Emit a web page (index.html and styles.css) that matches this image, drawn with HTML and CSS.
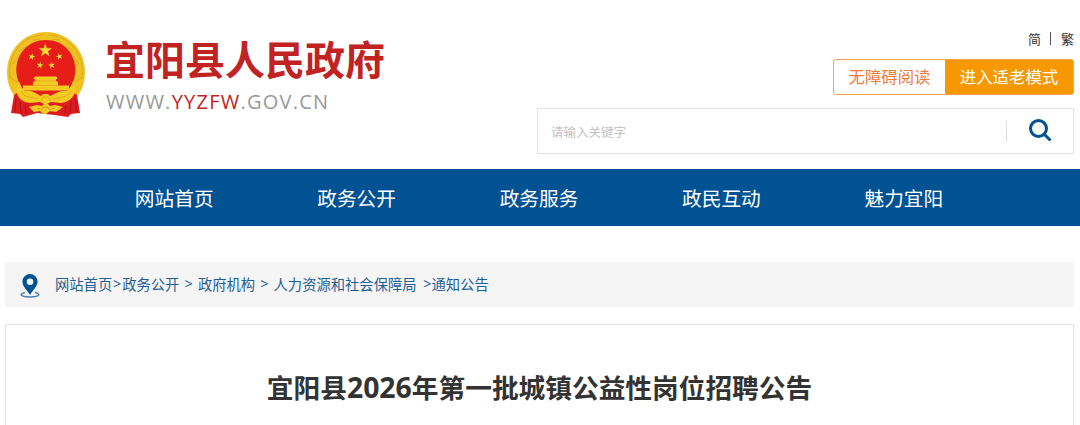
FILE: index.html
```html
<!DOCTYPE html>
<html lang="zh-CN">

<head>
  <meta charset="UTF-8" />
  <meta name="viewport" content="width=device-width, initial-scale=1.0" />
  <title>宜阳县人民政府</title>
  <link rel="stylesheet" href="styles.css">
</head>

<body>
  <header class="header container">
    <a href="#" class="logo">
      <svg class="emblem" viewBox="0 0 79 86" aria-hidden="true">
        <defs>
          <path id="star" d="M0-10 2.3-3.1 9.5-3.1 3.7 1.2 5.9 8.1 0 3.8-5.9 8.1-3.7 1.2-9.5-3.1-2.3-3.1Z" />
        </defs>
        <path fill="#efc122" d="M39 1C17 1 0 19 0 41c0 12 4 21 11 28h56c7-7 11-16 11-28C78 19 61 1 39 1Z" />
        <path fill="none" stroke="#d9a514" stroke-width=".8" d="M3 47C0 22 17 4 37 4M75 47C78 22 61 4 41 4M6 33l5-8M12 20l8-5M25 9l8-1M72 33l-5-8M66 20l-8-5M53 9l-8-1M2 46l8 5M76 46l-8 5" />
        <path fill="#e71d1a" d="M38.800 9C22 9 9.300 22 9.300 39c0 8 3 15 7 20l11 8h24l10-8c4-5 7-12 7-20C68.300 22 56 9 38.800 9Z" />
        <g fill="#fbd72f">
          <use href="#star" transform="translate(38.300 19.500) scale(.72)" />
          <use href="#star" transform="translate(24.700 25.700) rotate(15) scale(.36)" />
          <use href="#star" transform="translate(52.300 25.500) rotate(-15) scale(.36)" />
          <use href="#star" transform="translate(33 34.300) rotate(10) scale(.36)" />
          <use href="#star" transform="translate(44.700 34.300) rotate(-10) scale(.36)" />
        </g>
        <path fill="#f5ca22" d="M28 45.500h21.500l1 2-1.500 1V50l2 1v3.500h11v5H16v-5h10V51l2-1v-1.500l-1.500-1z" />
        <path stroke="#dca51a" stroke-width=".6" d="M28 50h21M26 54.500h25" />
        <path fill="#dd1c1e" d="M13 60 7 64 4 82l9 1 3 3 14-4 8.500 1 9 1L61 86l3-3 9-1-3-18-6-4-14 9H27Z" />
        <path fill="none" stroke="#b31322" stroke-width="1.200" d="M9 67 8 81M13 70l1 12M18 74l1 9M68 67l2 14M64 70l-1 12M59 74l-1 9" />
        <path fill="#f5ca22" d="M12 50c2 5 3 8 6 10 8-1 11 3 16 5l2-2h5l2 2c6-2 9-6 17-5 3-2 4-5 6-10l3 8c-2 9-7 13-15 14l-10-1-4 2h-3l-4-2-10 1C15 71 10 67 9 58Z" />
        <path fill="none" stroke="#dba017" stroke-width=".8" d="M14 60c3 7 11 6 18 8M64 60c-3 7-11 6-18 8M34 70l2-4h5l3 4" />
        <path fill="#f5ca22" d="M22 76l8-2 5 1 2-2h4l2 2 5-1 8 2-7 5-6-1-4 3h-3l-3-3-6 1Z" />
        <path fill="none" stroke="#d68e15" stroke-width="1" d="M34 79c2-4 7-4 9 0M30 77l3 1M48 77l-3 1" />
      </svg>
      <div class="logo-text">
        <h1>宜阳县人民政府</h1>
        <p>WWW.<span>YYZFW</span>.GOV.CN</p>
      </div>
    </a>

    <div class="tools">
      <div class="lang"><a href="#">简</a><i></i><a href="#">繁</a></div>
      <div class="modes">
        <a href="#" class="mode">无障碍阅读</a>
        <a href="#" class="mode mode-old">进入适老模式</a>
      </div>
      <form class="search">
        <input type="text" placeholder="请输入关键字">
        <button type="button" aria-label="搜索">
          <svg viewBox="0 0 24 24"><circle cx="10.500" cy="9.500" r="8" /><path d="m16 15 6.500 6.500" /></svg>
        </button>
      </form>
    </div>
  </header>

  <nav class="nav">
    <a href="#">网站首页</a>
    <a href="#">政务公开</a>
    <a href="#">政务服务</a>
    <a href="#">政民互动</a>
    <a href="#">魅力宜阳</a>
  </nav>

  <main class="container">
    <div class="crumbs">
      <svg class="pin" viewBox="0 0 20 24" aria-hidden="true">
        <path fill="none" stroke="#4d82b0" stroke-width="1.500" d="M5 18.500C-1.500 20 .5 23 10 23s11.500-3 5-4.500" />
        <path fill="#005293" fill-rule="evenodd" d="M10 0a7.600 7.600 0 0 0-7.600 7.600C2.400 12.500 7 16 10 21c3-5 7.600-8.500 7.600-13.400A7.600 7.600 0 0 0 10 0Zm0 4.400a3.300 3.300 0 1 1 0 6.600 3.300 3.300 0 0 1 0-6.600Z" />
      </svg>
      <a href="#">网站首页</a><i class="tight">&gt;</i><a href="#">政务公开</a><i>&gt;</i><a href="#">政府机构</a><i>&gt;</i><a href="#">人力资源和社会保障局</a><i class="last">&gt;</i><a href="#">通知公告</a>
    </div>

    <article class="article">
      <h2>宜阳县<span>2026</span>年第一批城镇公益性岗位招聘公告</h2>
    </article>
  </main>
</body>

</html>
```
FILE: styles.css
```css
* {
  box-sizing: border-box;
}

body {
  margin: 0;
  font-family: "Noto Sans", "Noto Sans CJK SC", sans-serif;
  background: #fff;
  color: #333;
}

a {
  color: inherit;
  text-decoration: none;
}

i {
  font-style: normal;
}

.container {
  margin: 0 6px 0 5px;
}

.header {
  display: flex;
  justify-content: space-between;
  height: 169px;
}

.logo {
  display: flex;
  padding: 31px 0 0 2px;
}

.emblem {
  width: 79px;
  height: 86px;
}

.logo-text {
  margin-left: 19px;
}

.logo h1 {
  margin: 0;
  padding-top: 4px;
  font-size: 40px;
  line-height: 50px;
  font-weight: 700;
  color: #c12323;
  white-space: nowrap;
}

.logo p {
  margin: 4px 0 0 1px;
  font-family: "Open Sans", sans-serif;
  font-size: 20px;
  line-height: 26px;
  letter-spacing: 1.240px;
  color: #999;
}

.logo p span {
  color: #c12323;
}

.tools {
  display: flex;
  flex-direction: column;
  align-items: flex-end;
  width: 537px;
  padding-top: 30px;
}

.lang {
  display: flex;
  align-items: center;
  height: 16px;
  font-size: 13px;
}

.lang i {
  width: 1px;
  height: 13px;
  margin: 0 10px 0 9px;
  background: #555;
}

.modes {
  display: flex;
  width: 241px;
  height: 36px;
  margin-top: 13px;
  border: 1px solid #f5a64c;
  border-radius: 3px;
  font-size: 16.400px;
  line-height: 34px;
  text-align: center;
}

.mode {
  width: 111px;
  color: #ee7a3c;
}

.mode-old {
  flex: 1;
  background: #f79800;
  color: #fff;
}

.search {
  display: flex;
  align-items: center;
  width: 537px;
  height: 46px;
  margin-top: 13px;
  border: 1px solid #e4e4e4;
}

.search input {
  flex: 1;
  padding: 0 13px;
  border: 0;
  outline: 0;
  font: 12.500px "Noto Sans CJK SC", sans-serif;
}

.search input::placeholder {
  color: #c4c4c4;
}

.search button {
  display: flex;
  justify-content: center;
  align-items: center;
  width: 67px;
  height: 21px;
  padding: 0;
  border: 0;
  border-left: 1px solid #ddd;
  background: none;
}

.search svg {
  width: 24px;
  height: 24px;
  fill: none;
  stroke: #005293;
  stroke-width: 3;
}

.nav {
  display: flex;
  height: 57px;
  padding: 0 85px 0 83px;
  background: #005293;
  color: #fff;
  font-size: 19.700px;
  line-height: 59px;
  text-align: center;
}

.nav a {
  flex: 1;
}

.crumbs {
  display: flex;
  align-items: center;
  height: 45px;
  margin-top: 36px;
  padding-left: 15px;
  background: #f5f5f5;
  color: #1f5f98;
  font-size: 14.300px;
  white-space: nowrap;
}

.crumbs a,
.crumbs i {
  margin-top: -2px;
}

.pin {
  width: 20px;
  height: 24px;
  margin: 3px 15px 0 0;
}

.crumbs i {
  width: 18.500px;
  text-align: center;
}

.crumbs .tight {
  width: 10px;
}

.crumbs .last {
  width: 15px;
  text-align: right;
}

.article {
  height: 101px;
  margin-top: 17px;
  border: 1px solid #e4e4e4;
  border-bottom: 0;
}

.article h2 {
  margin: 42px 0 0;
  font-size: 26.700px;
  line-height: 40px;
  font-weight: 700;
  text-align: center;
}

.article h2 span {
  font-family: "Open Sans", sans-serif;
  font-size: 28.400px;
}
```
